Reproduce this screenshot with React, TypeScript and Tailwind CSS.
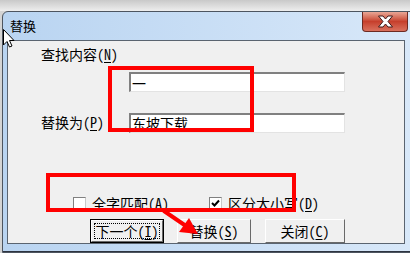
import React from 'react'

const cjk = "font-['Noto_Sans_Mono_CJK_SC','Noto_Sans_CJK_SC',monospace]"

function Key({ k }: { k: string }) {
  return (
    <>
      (<span className="underline underline-offset-2">{k}</span>)
    </>
  )
}

function TextBox({ value }: { value: string }) {
  return (
    <div className="w-[216px] h-[20px] bg-white border-t-2 border-l-2 border-t-[#808080] border-l-[#808080] border-b border-r border-b-[#e3e3e3] border-r-[#e3e3e3] flex items-center pl-[1px] text-[14px] leading-none">
      {value}
    </div>
  )
}

function CheckBox({ checked, label, k }: { checked?: boolean; label: string; k: string }) {
  return (
    <div className="flex items-center gap-[6px]">
      <div className="w-[13px] h-[13px] bg-white border border-t-[#808080] border-l-[#808080] border-b-[#c8c8c8] border-r-[#c8c8c8] flex items-center justify-center">
        {checked && (
          <svg width="9" height="9" viewBox="0 0 9 9">
            <path d="M1 4 L3.5 6.5 L8 1.5" stroke="#000" strokeWidth="2" fill="none" />
          </svg>
        )}
      </div>
      <span>
        {label}
        <Key k={k} />
      </span>
    </div>
  )
}

function Button({ label, k, w, focused }: { label: string; k: string; w: string; focused?: boolean }) {
  if (focused) {
    return (
      <div className={`${w} h-[24px] border border-black`}>
        <div className="w-full h-full bg-[#f0f0f0] border border-t-white border-l-white border-b-[#696969] border-r-[#696969] p-[2px]">
          <div className="w-full h-full border border-dotted border-black flex items-center justify-center">
            {label}
            <Key k={k} />
          </div>
        </div>
      </div>
    )
  }
  return (
    <div className={`${w} h-[24px] bg-[#f0f0f0] border border-t-white border-l-white border-b-[#696969] border-r-[#696969] flex items-center justify-center`}>
      {label}
      <Key k={k} />
    </div>
  )
}

export default function App() {
  return (
    <div className={`relative w-[410px] h-[253px] overflow-hidden bg-[#d4d4d4] flex flex-col text-black text-[14px] ${cjk}`}>
      <div className="h-[11px] shrink-0 bg-gradient-to-b from-[#c9c9c9] to-[#eeeeee]" />

      <div className="ml-[2px] w-[412px] flex-1 flex flex-col rounded-tl-[6px] border border-[#4d5560] bg-gradient-to-r from-[#b9d4f1] to-[#d8e8f9] overflow-hidden">
        {/* title bar */}
        <div className="h-[28px] shrink-0 flex items-start justify-between">
          <div className="pl-[7px] pt-[7px] text-[13px] leading-none">替换</div>
          <div className="mr-[5px] w-[46px] h-[20px] rounded-b-[4px] border border-t-0 border-[#6d2a22] bg-gradient-to-b from-[#e8a696] via-[#c63f2c] to-[#d9705d] flex items-center justify-center">
            <svg width="17" height="13" viewBox="0 0 17 13">
              <path d="M1.5 1 L6 1 L8.5 4 L11 1 L15.5 1 L11 6.5 L15.5 12 L11 12 L8.5 9 L6 12 L1.5 12 L6 6.5 Z" fill="#fff" stroke="#3e1a1a" strokeWidth="1" />
            </svg>
          </div>
        </div>

        {/* client area */}
        <div className="ml-[4px] w-[398px] h-[204px] shrink-0 bg-[#f0f0f0] border border-[#5a6470] flex flex-col pl-[33px]">
          <div className="mt-[5px] leading-[16px]">
            查找内容<Key k="N" />
          </div>
          <div className="mt-[10px] ml-[88px]">
            <TextBox value="一" />
          </div>
          <div className="mt-[20px] flex items-center">
            <div className="w-[88px]">
              替换为<Key k="P" />
            </div>
            <TextBox value="东坡下载" />
          </div>
          <div className="mt-[62px] ml-[32px] flex items-center gap-[40px] leading-[16px]">
            <CheckBox label="全字匹配" k="A" />
            <CheckBox checked label="区分大小写" k="D" />
          </div>
          <div className="mt-[8px] ml-[49px] flex items-center">
            <Button label="下一个" k="I" w="w-[74px]" focused />
            <div className="w-[13px]" />
            <Button label="替换" k="S" w="w-[74px]" />
            <div className="w-[14px]" />
            <Button label="关闭" k="C" w="w-[80px]" />
          </div>
        </div>
        <div className="flex-1 border-b border-[#2d3440]" />
      </div>

      {/* annotations */}
      <div className="absolute left-[108px] top-[66px] w-[146px] h-[66px] border-4 border-[#ff0000]" />
      <div className="absolute left-[46px] top-[173px] w-[250px] h-[39px] border-4 border-[#ff0000]" />
      <svg className="absolute left-0 top-0" width="410" height="253" viewBox="0 0 410 253">
        <path d="M164 211 L186 226" stroke="#ff0000" strokeWidth="4" strokeLinecap="round" />
        <path d="M198 234 L179 232 L189 218 Z" fill="#ff0000" />
        <path d="M3.5 29.5 L3.5 45 L7 41.5 L9.5 47 L12 46 L9.5 40.5 L14 40.5 Z" fill="#fff" stroke="#000" strokeWidth="1" />
      </svg>
    </div>
  )
}
